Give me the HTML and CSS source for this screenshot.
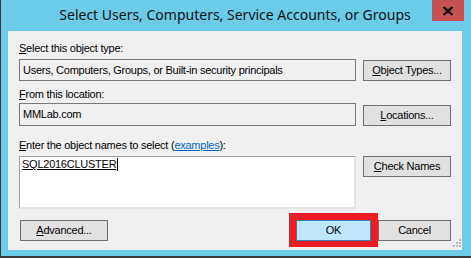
FILE: index.html
```html
<!DOCTYPE html>
<html>
<head>
<meta charset="utf-8">
<link rel="stylesheet" href="styles.css">
</head>
<body>
<div class="window">
  <div class="titlebar">
    <div class="title">Select Users, Computers, Service Accounts, or Groups</div>
    <div class="close">
      <svg width="12" height="10" viewBox="0 0 12 10"><path d="M1.5 1 L10.5 9 M10.5 1 L1.5 9" stroke="#000" stroke-width="2.2"/></svg>
    </div>
  </div>
  <div class="client">
    <div class="label"><u>S</u>elect this object type:</div>
    <div class="row r1">
      <div class="field">Users, Computers, Groups, or Built-in security principals</div>
      <div class="btn"><u>O</u>bject Types...</div>
    </div>
    <div class="label l2"><u>F</u>rom this location:</div>
    <div class="row r2">
      <div class="field">MMLab.com</div>
      <div class="btn"><u>L</u>ocations...</div>
    </div>
    <div class="label l3"><u>E</u>nter the object names to select (<a class="link">examples</a>):</div>
    <div class="row r3">
      <div class="area"><span class="entry">SQL2016CLUSTER</span><span class="caret"></span></div>
      <div class="btn"><u>C</u>heck Names</div>
    </div>
    <div class="bottom">
      <div class="btn"><u>A</u>dvanced...</div>
      <div class="spacer"></div>
      <div class="highlight"><div class="btn ok">OK</div></div>
      <div class="btn cancel">Cancel</div>
    </div>
    <svg class="grip" width="10" height="10" viewBox="0 0 10 10">
      <g fill="#b8b8b8">
        <rect x="8" y="0" width="2" height="2"/>
        <rect x="5" y="3" width="2" height="2"/><rect x="8" y="3" width="2" height="2"/>
        <rect x="2" y="6" width="2" height="2"/><rect x="5" y="6" width="2" height="2"/><rect x="8" y="6" width="2" height="2"/>
      </g>
    </svg>
  </div>
</div>
</body>
</html>
```

FILE: styles.css
```css
* { box-sizing: border-box; }
html, body { margin: 0; padding: 0; }
body { width: 471px; height: 258px; overflow: hidden; font-family: "Liberation Sans", Arial, sans-serif; font-size: 11px; color: #000; }
.window {
  width: 471px; height: 258px;
  background: #6bcbe9;
  border-left: 1px solid #3b3b3b;
  border-bottom: 2px solid #3b3b3b;
  position: relative;
}
.titlebar { height: 31px; position: relative; }
.title {
  text-align: center;
  font-family: "Noto Sans", "Open Sans", sans-serif;
  font-size: 14px;
  line-height: 30px;
  padding-right: 2px;
  color: #111;
}
.close {
  position: absolute; right: 7px; top: 0;
  width: 32px; height: 21px;
  background: #c75050;
  display: flex; align-items: center; justify-content: center;
}
.client {
  margin-left: 7px;
  width: 454px; height: 219px;
  background: #f0f0f0;
  padding: 11px 11px 0 11px;
  position: relative;
  letter-spacing: -0.25px;
}
.label { height: 13px; line-height: 13px; }
.row { display: flex; align-items: flex-start; gap: 7px; }
.r1 { margin-top: 4px; }
.l2 { margin-top: 7px; }
.r2 { margin-top: 2px; }
.l3 { margin-top: 13px; }
.r3 { margin-top: 4px; }
.field {
  width: 337px; height: 22px;
  border: 1px solid #7a7a7a;
  background: #f0f0f0;
  padding-left: 3px;
  line-height: 20px;
}
.btn {
  width: 88px; height: 21px;
  border: 1px solid #707070;
  background: #e1e1e1;
  text-align: center;
  line-height: 19px;
  flex-shrink: 0;
}
.r1 .btn { margin-top: 1px; }
.r2 .btn { margin-top: 2px; }
.r2 .field { height: 23px; line-height: 21px; }
.area {
  width: 337px; height: 53px;
  background: #fff;
  border-top: 1px solid #a0a0a0;
  border-left: 1px solid #a0a0a0;
  border-right: 2px solid #e3e3e3;
  border-bottom: 2px solid #e3e3e3;
  padding: 1px 0 0 2px;
  line-height: 13px;
  display: flex; align-items: flex-start;
}
.entry { text-decoration: underline; }
.caret { display: inline-block; width: 1px; height: 13px; background: #000; margin-left: 1px; }
.link { color: #0066cc; text-decoration: underline; }
.bottom { display: flex; align-items: center; margin-top: 4px; }
.bottom > .btn:first-child { margin-left: 1px; }
.spacer { flex: 1; }
.highlight {
  width: 89px; height: 34px;
  border-style: solid;
  border-color: #ed1c24;
  border-width: 7px 7px 6px 7px;
  background: #f0f0f0;
  flex-shrink: 0;
}
.ok {
  width: 75px; height: 21px;
  background: #bee6fd;
  border-color: #3c7fb1;
}
.cancel { width: 73px; }
.grip { position: absolute; right: 1px; bottom: 1px; }
```
